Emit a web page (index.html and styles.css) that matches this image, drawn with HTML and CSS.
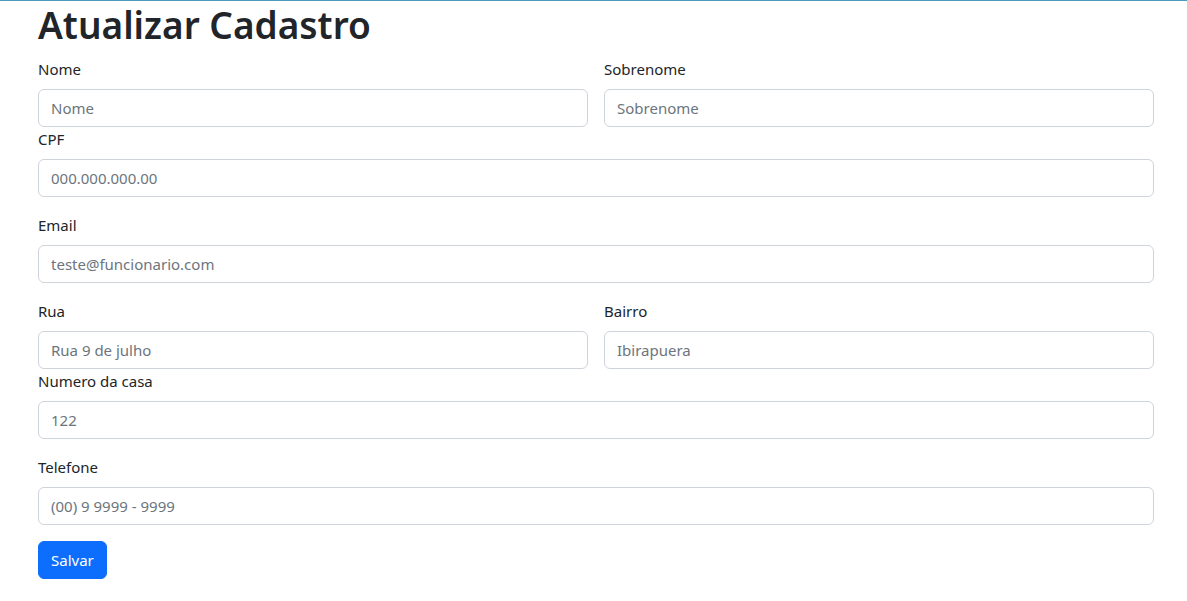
FILE: index.html
```html
<!DOCTYPE html>
<html lang="pt-BR">
<head>
<meta charset="utf-8">
<title>Atualizar Cadastro</title>
<link rel="stylesheet" href="styles.css">
</head>
<body>
<div class="page">
  <h1 class="title">Atualizar Cadastro</h1>
  <form class="form">
    <div class="row2">
      <div class="field">
        <label class="label">Nome</label>
        <input class="input" placeholder="Nome">
      </div>
      <div class="field">
        <label class="label">Sobrenome</label>
        <input class="input" placeholder="Sobrenome">
      </div>
    </div>
    <div class="field spaced">
      <label class="label">CPF</label>
      <input class="input" placeholder="000.000.000.00">
    </div>
    <div class="field spaced">
      <label class="label">Email</label>
      <input class="input" placeholder="teste@funcionario.com">
    </div>
    <div class="row2">
      <div class="field">
        <label class="label">Rua</label>
        <input class="input" placeholder="Rua 9 de julho">
      </div>
      <div class="field">
        <label class="label">Bairro</label>
        <input class="input" placeholder="Ibirapuera">
      </div>
    </div>
    <div class="field spaced">
      <label class="label">Numero da casa</label>
      <input class="input" placeholder="122">
    </div>
    <div class="field spaced">
      <label class="label">Telefone</label>
      <input class="input" placeholder="(00) 9 9999 - 9999">
    </div>
    <div class="actions">
      <button type="button" class="btn">Salvar</button>
    </div>
  </form>
</div>
</body>
</html>
```
FILE: styles.css
```css
* { box-sizing: border-box; }
html, body { margin: 0; padding: 0; background: #fff; }
body {
  border-top: 1px solid #4a9bbf;
  font-family: "Noto Sans", "Open Sans", sans-serif;
  font-size: 15px;
  line-height: 24px;
  color: #212529;
}
.page {
  width: 1116px;
  margin-left: 38px;
}
.title {
  margin: 0 0 8px 0;
  font-size: 37px;
  font-weight: 600;
  line-height: 48px;
}
.form { display: flex; flex-direction: column; }
.row2 {
  display: grid;
  grid-template-columns: 1fr 1fr;
  column-gap: 16px;
}
.field { display: flex; flex-direction: column; }
.spaced { margin-bottom: 16px; }
.label {
  display: block;
  line-height: 24px;
  margin-bottom: 8px;
}
.input {
  display: block;
  width: 100%;
  height: 38px;
  padding: 6px 12px;
  font: inherit;
  color: #212529;
  background: #fff;
  border: 1px solid #ced4da;
  border-radius: 6px;
  outline: none;
}
.input::placeholder { color: #6c757d; opacity: 1; }
.actions { display: flex; }
.btn {
  height: 38px;
  padding: 6px 12px;
  font: inherit;
  color: #fff;
  background: #0d6efd;
  border: 1px solid #0d6efd;
  border-radius: 6px;
}
```
